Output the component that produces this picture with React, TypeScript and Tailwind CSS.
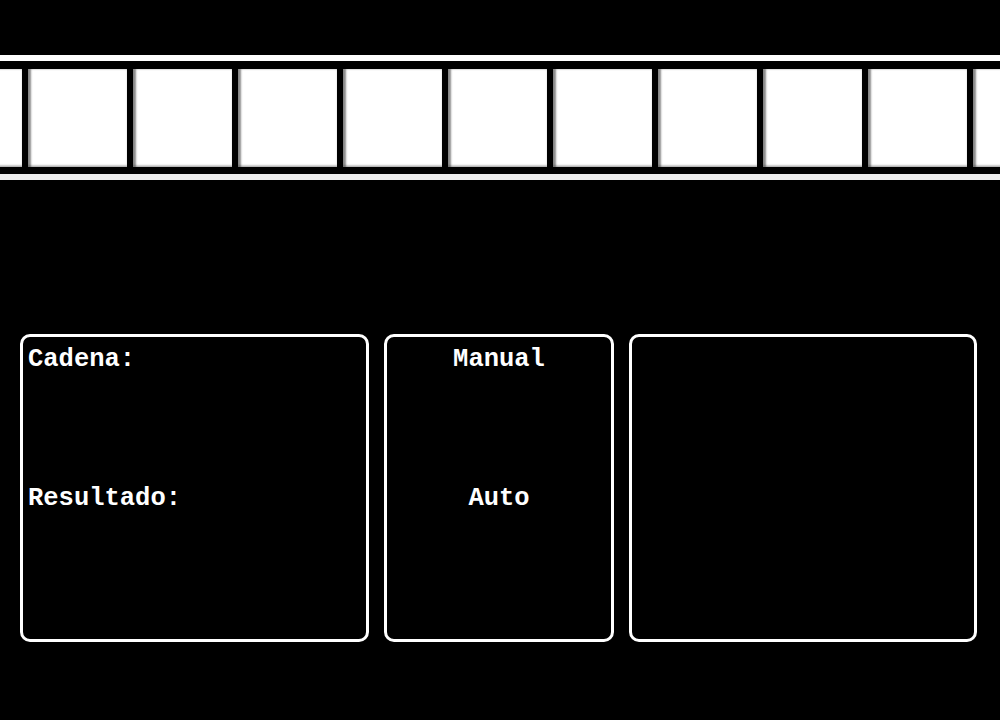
import React from "react";

const cells = Array.from({ length: 11 });

export default function App() {
  return (
    <div className="w-[1000px] h-[720px] bg-black overflow-hidden flex flex-col" style={{ fontFamily: '"Liberation Mono", "Courier New", monospace' }}>
      <div className="mt-[55px] h-[6px] bg-white" />
      <div className="mt-[8px] h-[98px] flex gap-[6px] ml-[-77px] overflow-hidden">
        {cells.map((_, i) => (
          <div key={i} className="w-[99px] h-[98px] shrink-0 bg-white shadow-[inset_3px_0_2px_rgba(0,0,0,0.45),inset_0_-2px_2px_rgba(0,0,0,0.2)]" />
        ))}
      </div>
      <div className="mt-[7px] h-[6px] bg-[#ececec]" />
      <div className="mt-[154px] ml-[20px] flex gap-[15px] text-white text-[25.5px] font-bold leading-[30px]">
        <div className="w-[349px] h-[308px] border-[3px] border-white rounded-[10px] flex flex-col px-[5px] pt-[8px]">
          <div>Cadena:</div>
          <div className="mt-[109px]">Resultado:</div>
        </div>
        <div className="w-[230px] h-[308px] border-[3px] border-white rounded-[10px] flex flex-col items-center pt-[8px]">
          <div>Manual</div>
          <div className="mt-[109px]">Auto</div>
        </div>
        <div className="w-[348px] h-[308px] border-[3px] border-white rounded-[10px]" />
      </div>
    </div>
  );
}
